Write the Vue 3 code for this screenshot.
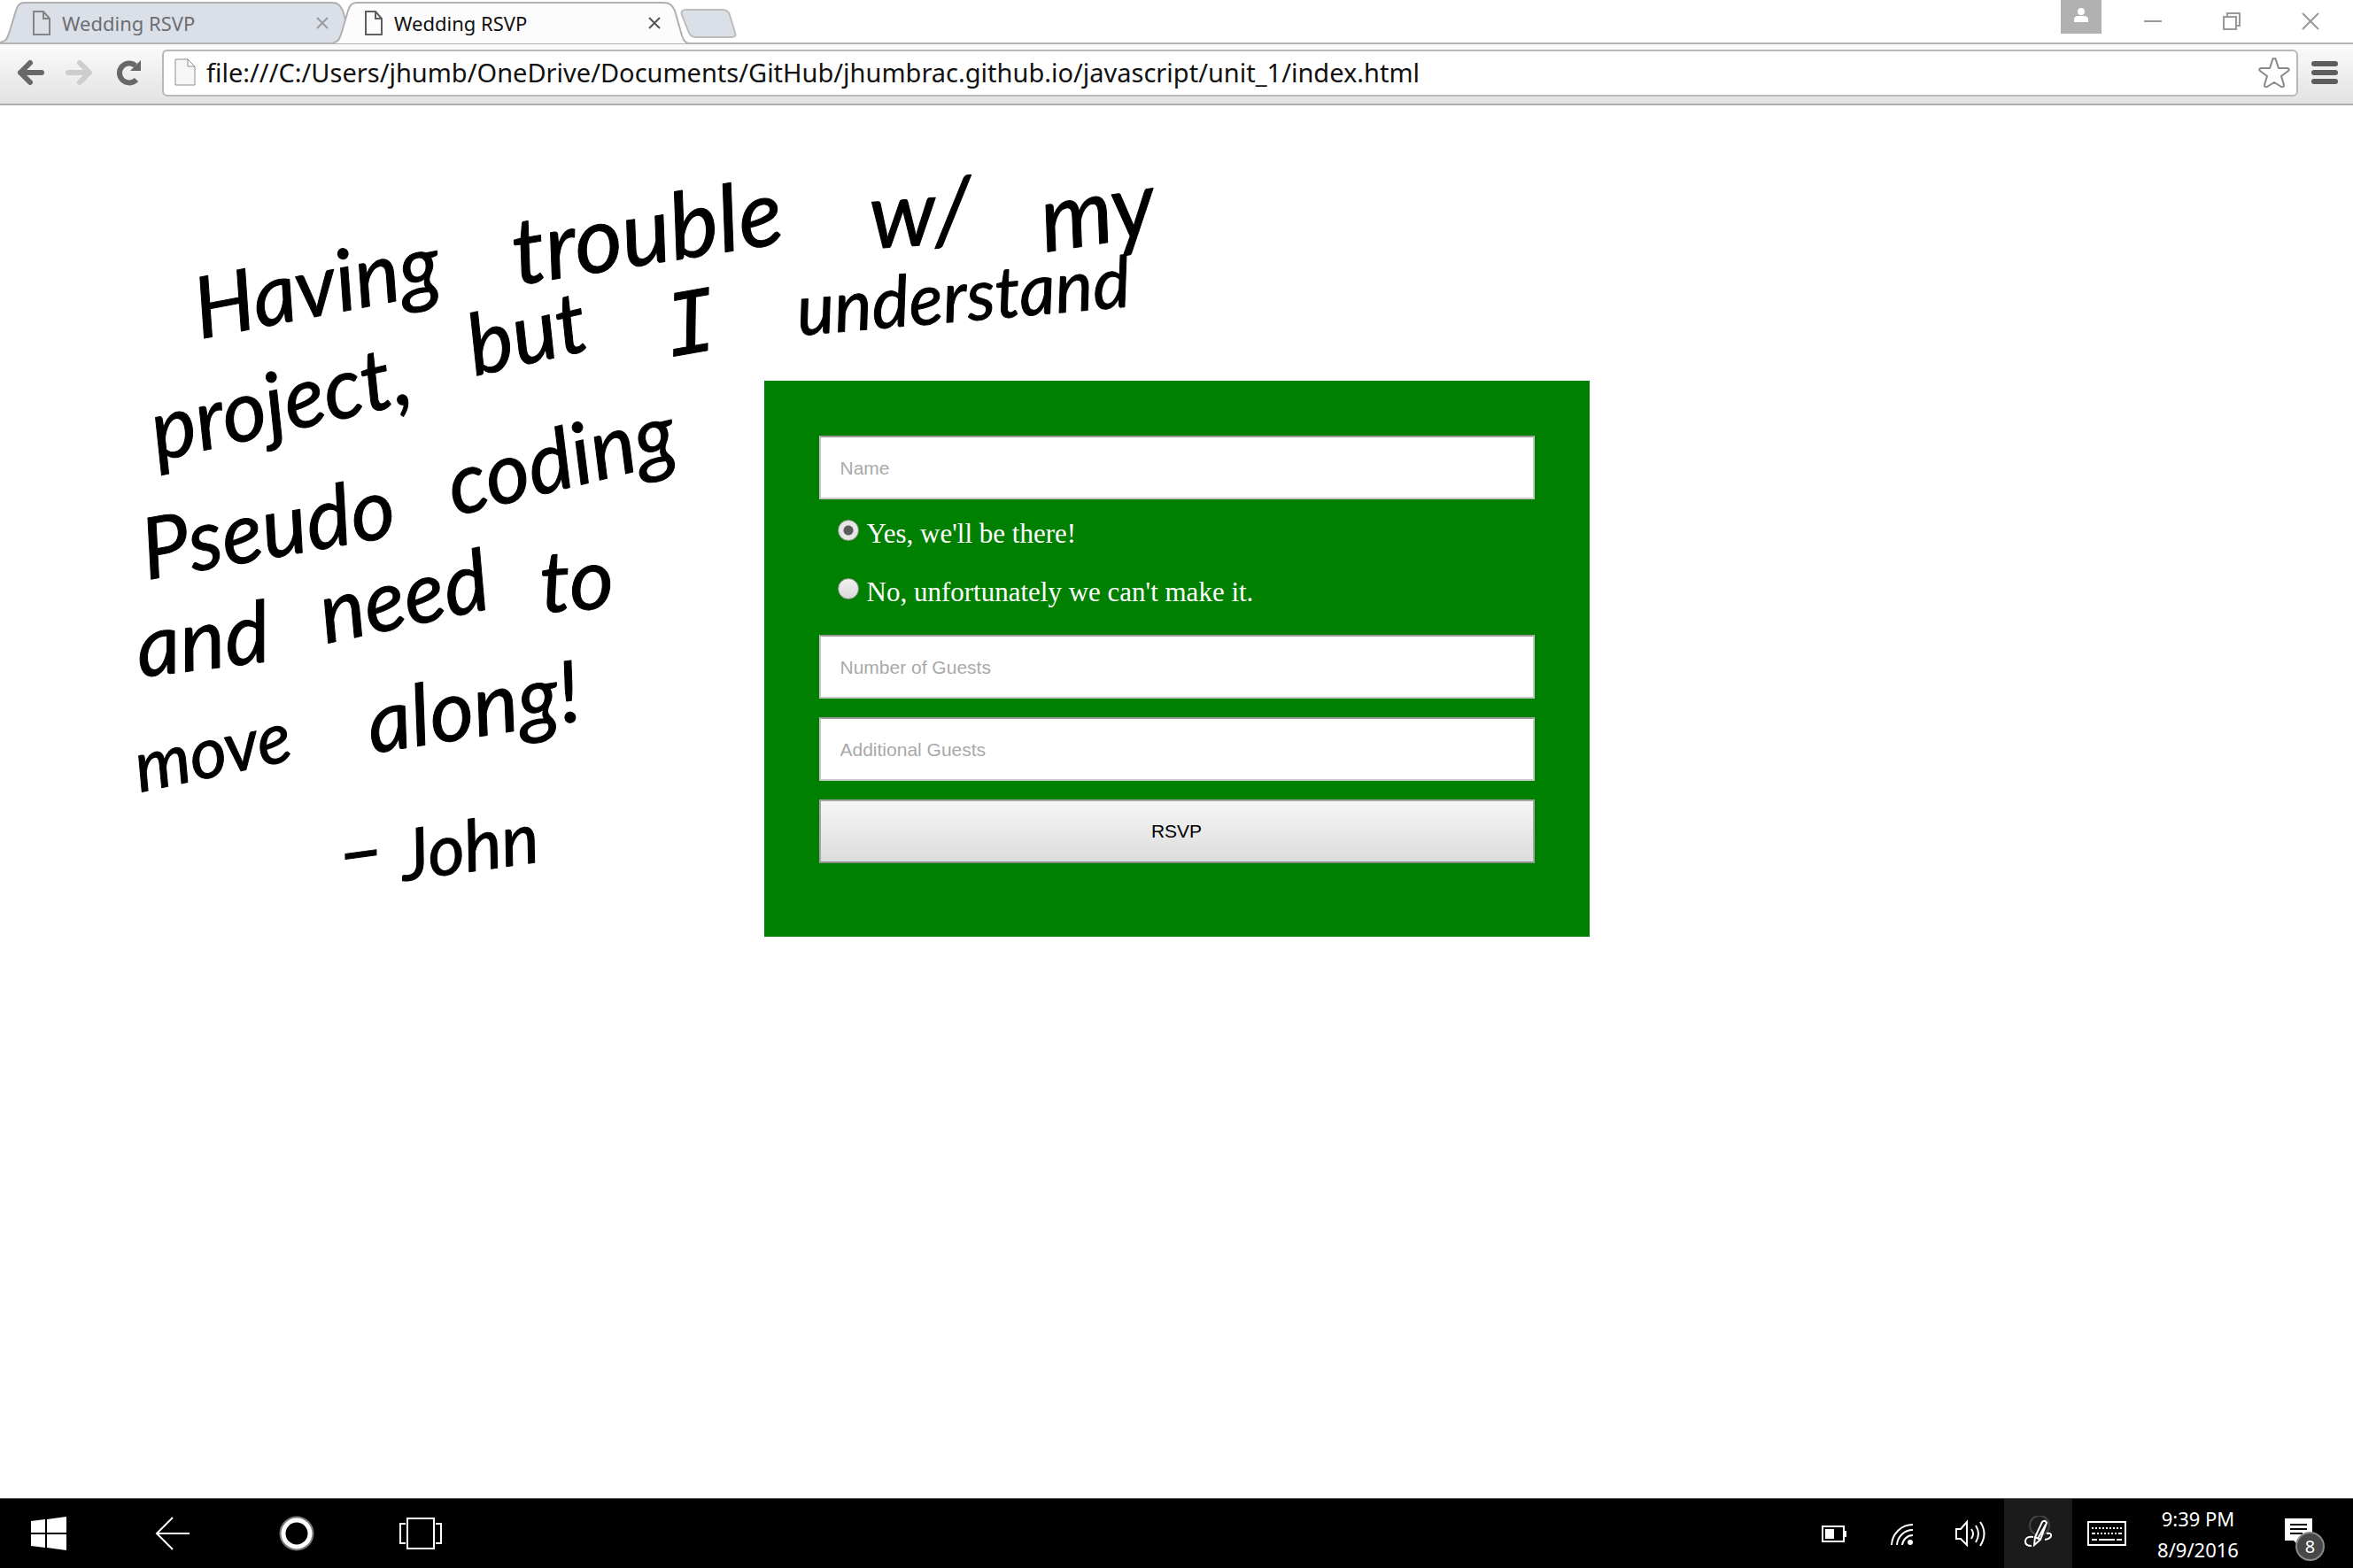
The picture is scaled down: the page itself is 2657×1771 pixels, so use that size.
<script setup>
import { ref } from 'vue'

const tabs = [
  { title: 'Wedding RSVP', active: false },
  { title: 'Wedding RSVP', active: true },
]
const address = ref('file:///C:/Users/jhumb/OneDrive/Documents/GitHub/jhumbrac.github.io/javascript/unit_1/index.html')
const attending = ref('yes')

// Pen note: every word has its own spot, slope and size on the page
const words = [
  { t: 'Having', x: 226, y: 264, r: -11, s: 'l' },
  { t: 'trouble', x: 584, y: 203, r: -9, s: 'xl' },
  { t: 'w/', x: 984, y: 162, r: -4, s: 'xl' },
  { t: 'my', x: 1180, y: 166, r: -9, s: 'xl' },
  { t: 'project,', x: 178, y: 402, r: -13, s: 'l' },
  { t: 'but', x: 536, y: 306, r: -13, s: 'l' },
  { t: 'I', x: 758, y: 284, r: -10, s: 'serif' },
  { t: 'understand', x: 902, y: 260, r: -5, s: 'm' },
  { t: 'Pseudo', x: 166, y: 536, r: -10, s: 'l' },
  { t: 'coding', x: 514, y: 464, r: -14, s: 'l' },
  { t: 'and', x: 158, y: 646, r: -7, s: 'l' },
  { t: 'need', x: 368, y: 608, r: -12, s: 'l' },
  { t: 'to', x: 612, y: 573, r: -4, s: 'l' },
  { t: 'move', x: 158, y: 776, r: -12, s: 'm' },
  { t: 'along!', x: 420, y: 732, r: -9, s: 'l' },
  { t: '–', x: 384, y: 878, r: -8, s: 'l' },
  { t: 'John', x: 456, y: 876, r: -8, s: 'm' },
]
</script>

<template>
  <div class="screen">
    <header class="tabstrip">
      <nav class="tabs">
        <div v-for="(tab, i) in tabs" :key="i" class="tab" :class="{ active: tab.active }">
          <svg class="tab-shape" viewBox="0 0 404 48" preserveAspectRatio="none" aria-hidden="true">
            <path d="M0 47C8 45 8 42 11 34L18 10C20 4 22 1 28 1H374C382 1 384 4 387 10L395 38C397 44 399 47 404 47" />
          </svg>
          <svg class="doc" viewBox="0 0 20 28" aria-hidden="true"><path d="M1 1H12L19 9V27H1ZM12 1V9H19" /></svg>
          <a href="#" class="tab-title">{{ tab.title }}</a>
          <button class="tab-close" aria-label="Close tab">
            <svg viewBox="0 0 16 16"><path d="M2 2L14 14M14 2L2 14" /></svg>
          </button>
        </div>
        <button class="newtab" aria-label="New tab">
          <svg viewBox="0 0 66 34"><path d="M7 1H48Q54 1 56 7L62 27Q64 32 58 32H18Q12 32 10 27L2 7Q0 1 7 1Z" /></svg>
        </button>
      </nav>
      <div class="window-controls">
        <button class="profile" aria-label="Profile">
          <svg viewBox="0 0 18 18"><circle cx="9" cy="5" r="4" /><path d="M1 17V14Q1 10 6 10H12Q17 10 17 14V17Z" /></svg>
        </button>
        <button aria-label="Minimize"><svg viewBox="0 0 20 20"><path d="M0 10H20" /></svg></button>
        <button aria-label="Restore"><svg viewBox="0 0 20 20"><path d="M1 5H15V19H1ZM5 5V1H19V15H15" /></svg></button>
        <button aria-label="Close"><svg viewBox="0 0 20 20"><path d="M1 1L19 19M19 1L1 19" /></svg></button>
      </div>
    </header>

    <div class="toolbar">
      <button class="tool" aria-label="Back"><svg viewBox="0 0 32 30"><path d="M29 15H5M16 4L5 15L16 26" /></svg></button>
      <button class="tool faint" aria-label="Forward"><svg viewBox="0 0 32 30"><path d="M3 15H27M16 4L27 15L16 26" /></svg></button>
      <button class="tool reload" aria-label="Reload">
        <svg viewBox="0 0 32 30"><path d="M24 23A11 11 0 1 1 23 7" /><path class="solid" d="M29 1V13H17Z" /></svg>
      </button>
      <div class="omnibox">
        <svg class="page-icon" viewBox="0 0 24 32" aria-hidden="true"><path d="M1 1H15L23 9V30H1ZM15 1V9H23" /></svg>
        <input v-model="address" type="text" aria-label="Address" spellcheck="false" />
        <button class="star" aria-label="Bookmark">
          <svg viewBox="0 0 36 34"><path d="M18 1Q20 1 20 3L23 12H33Q36 13 34 15L26 21L29 31Q29 34 26 33L18 28L10 33Q7 34 7 31L10 21L2 15Q0 13 3 12H13L16 3Q16 1 18 1Z" /></svg>
        </button>
      </div>
      <button class="menu" aria-label="Menu"><i></i><i></i><i></i></button>
    </div>

    <main class="page">
      <form class="rsvp" @submit.prevent>
        <input class="field" type="text" placeholder="Name" aria-label="Name" />
        <div class="choices">
          <label><input v-model="attending" type="radio" name="attending" value="yes" /><span>Yes, we'll be there!</span></label>
          <label><input v-model="attending" type="radio" name="attending" value="no" /><span>No, unfortunately we can't make it.</span></label>
        </div>
        <input class="field" type="text" placeholder="Number of Guests" aria-label="Number of Guests" />
        <input class="field" type="text" placeholder="Additional Guests" aria-label="Additional Guests" />
        <button class="field submit" type="submit">RSVP</button>
      </form>

      <svg class="ink">
        <text v-for="(w, i) in words" :key="i" :class="w.s" :transform="`translate(${w.x} ${w.y}) rotate(${w.r})`">{{ w.t }}</text>
      </svg>
    </main>

    <footer class="taskbar">
      <div class="left">
        <button aria-label="Start">
          <svg viewBox="0 0 40 40"><path class="fill" d="M0 6L16 4V19H0ZM18 4L40 1V19H18ZM0 21H16V36L0 34ZM18 21H40V39L18 36Z" /></svg>
        </button>
        <button aria-label="Back"><svg viewBox="0 0 40 40"><path d="M39 20H2M20 2L2 20L20 38" /></svg></button>
        <button aria-label="Search"><svg viewBox="0 0 40 40"><circle class="halo" cx="20" cy="20" r="17" /><circle class="ring" cx="20" cy="20" r="15" /></svg></button>
        <button aria-label="Task view"><svg class="wide" viewBox="0 0 48 40"><path d="M9 3H39V37H9ZM7 9H1V31H7M41 9H47V31H41" /></svg></button>
      </div>
      <div class="tray">
        <button class="slot" aria-label="Battery">
          <svg viewBox="0 0 40 40"><path d="M7 12H31V29H7ZM33 17V24" /><path class="fill" d="M10 15H20V26H10Z" /></svg>
        </button>
        <button class="slot" aria-label="Network">
          <svg viewBox="0 0 40 40"><path d="M8 33A24 24 0 0 1 32 10M14 33A18 18 0 0 1 32 16M20 33A12 12 0 0 1 32 22" /><circle class="fill" cx="29" cy="30" r="3" /></svg>
        </button>
        <button class="slot" aria-label="Volume">
          <svg viewBox="0 0 40 40"><path d="M4 15H9L16 7V33L9 26H4ZM21 15Q25 20 21 26M26 11Q32 20 26 30M31 7Q40 20 31 34" /></svg>
        </button>
        <button class="slot pen" aria-label="Pen">
          <svg viewBox="0 0 40 40"><circle class="dim" cx="21" cy="11" r="11" /><path d="M15 33L16 24L24 7Q27 4 29 8L22 27ZM16 24L22 27M19 26L28 10M14 24Q5 23 5 29Q5 34 12 34M29 20Q35 19 34 23Q33 26 27 27" /></svg>
        </button>
        <button class="slot" aria-label="Keyboard">
          <svg class="keys" viewBox="0 0 44 28"><path d="M1 1H43V27H1Z" /><path stroke-dasharray="2 2" d="M5 8H39" /><path stroke-dasharray="4 2 2 2 2 2 2 2 2 2 2 2 2 2 4" d="M5 14H39" /><path d="M5 21H11M13 21H31M33 21H39" /></svg>
        </button>
        <div class="clock"><time>9:39 PM</time><time>8/9/2016</time></div>
        <button class="notes" aria-label="Notifications">
          <svg viewBox="0 0 32 32"><path class="fill" d="M0 1H31V26H14V30L10 26H0Z" /><path class="lines" d="M6 8H25M6 13H25M6 18H20" /></svg>
          <span class="badge">8</span>
        </button>
      </div>
    </footer>
  </div>
</template>

<style>
body { margin: 0; background: #fff; }
</style>

<style scoped>
* { box-sizing: border-box; }
button { border: 0; padding: 0; margin: 0; background: none; color: inherit; display: flex; align-items: center; justify-content: center; }
svg { display: block; fill: none; flex: none; }
.screen { display: flex; flex-direction: column; min-height: 100vh; font-family: "Noto Sans", sans-serif; color: #000; }

.tabstrip { display: flex; justify-content: space-between; align-items: stretch; height: 50px; border-bottom: 2px solid #b4b4b4; }
.tabs { display: flex; padding-top: 2px; }
.tab { position: relative; display: flex; align-items: center; width: 404px; height: 47px; margin-right: -29px; padding: 0 32px 0 37px; flex: none; }
.tab.active { z-index: 1; height: 48px; margin-right: -11px; }
.tab-shape { position: absolute; inset: 0; width: 100%; height: 100%; fill: #dbe0e8; stroke: #b0b0b0; stroke-width: 2; }
.active .tab-shape { fill: #fcfcfc; }
.doc { position: relative; width: 20px; height: 28px; stroke: #858585; stroke-width: 2; }
.active .doc { stroke: #5f5f5f; }
.tab-title { position: relative; flex: 1; margin-left: 13px; font-size: 22px; line-height: 28px; color: #6c6e72; text-decoration: none; }
.active .tab-title { color: #111; }
.tab-close { position: relative; width: 16px; height: 16px; }
.tab-close svg { width: 16px; height: 16px; stroke: #989ba0; stroke-width: 2; }
.active .tab-close svg { stroke: #555; }
.newtab { width: 66px; height: 34px; margin-top: 8px; }
.newtab svg { width: 66px; height: 34px; fill: #dbe0e8; stroke: #bcbcbc; stroke-width: 2; }
.window-controls { display: flex; height: 48px; padding-right: 4px; }
.window-controls button { width: 89px; }
.window-controls svg { width: 20px; height: 20px; stroke: #999; stroke-width: 2; }
.window-controls .profile { width: 46px; height: 38px; margin-right: 13px; padding-bottom: 4px; background: #b1b1b1; }
.window-controls .profile svg { width: 18px; height: 18px; fill: #fff; stroke: none; }

.toolbar { display: flex; align-items: center; height: 69px; padding: 0 17px 3px 18px; background: linear-gradient(#fbfbfb, #e2e2e2); border-bottom: 2px solid #acacac; }
.tool { width: 32px; height: 32px; margin-right: 24px; }
.tool svg { width: 32px; height: 30px; stroke: #686868; stroke-width: 6; stroke-linecap: round; stroke-linejoin: round; }
.tool.faint svg { stroke: #cdcdcd; }
.tool.reload { margin-right: 21px; }
.reload svg { stroke-linecap: butt; }
.tool .solid { fill: #686868; stroke: none; }
.omnibox { flex: 1; display: flex; align-items: center; height: 53px; padding: 0 7px 0 12px; background: #fff; border: 2px solid #b8b8b8; border-radius: 6px; }
.page-icon { width: 24px; height: 32px; fill: #f7f7f7; stroke: #8e8e8e; stroke-width: 1; }
.omnibox input { flex: 1; min-width: 0; border: 0; outline: 0; padding: 0 0 0 12px; background: none; font: 29px/40px "Noto Sans", sans-serif; color: #111; }
.star svg { width: 36px; height: 34px; stroke: #888; stroke-width: 2; stroke-linejoin: round; }
.menu { flex-direction: column; gap: 4px; width: 30px; margin-left: 15px; }
.menu i { width: 30px; height: 6px; border-radius: 3px; background: #5d5d5d; }

.page { position: relative; flex: 1; padding-top: 311px; }
.rsvp { display: flex; flex-direction: column; width: 932px; max-width: 100%; margin: 0 auto; padding: 62px 62px 83px; background: #008000; }
.field { width: 100%; height: 72px; margin: 0 0 21px; padding: 2px 22px 0; border: 2px solid #c8c8c8; border-top-color: #9a9a9a; border-radius: 0; background: #fff; font: 21px "Liberation Sans", Arial, sans-serif; color: #000; }
.field::placeholder { color: #a9a9a9; opacity: 1; }
.submit { margin-bottom: 0; padding-top: 0; border-color: #a6a6a6 #a6a6a6 #8c8c8c; background: linear-gradient(#f6f6f6, #dcdcdc); }
.choices { margin: -13px 0 13px 21px; }
.choices label { display: flex; align-items: center; height: 66px; padding-bottom: 4px; color: #fff; font: 31px/36px "Liberation Serif", "Times New Roman", serif; }
.choices input { appearance: none; width: 24px; height: 24px; margin: 0 9px 8px 0; border: 1px solid #8f8f8f; border-radius: 50%; background: linear-gradient(#f0f0f0, #dadada); }
.choices input:checked { background: radial-gradient(circle, #5c5c5c 0 5px, #e6e6e6 6px); }

.ink { position: absolute; left: 0; top: 0; width: 100%; height: 100%; pointer-events: none; overflow: visible; }
.ink text { fill: #000; stroke: #000; stroke-width: 1; stroke-linejoin: round; font-family: Lato, sans-serif; font-style: italic; font-size: 96px; }
.ink .m { font-size: 80px; }
.ink .xl { font-size: 104px; }
.ink .serif { font-family: "DejaVu Sans Mono", monospace; }

.taskbar { display: flex; justify-content: space-between; height: 79px; background: #000; border-top: 1px solid #555; color: #fff; }
.taskbar svg { width: 40px; height: 40px; stroke: #fff; stroke-width: 2; }
.taskbar svg .fill { fill: #fff; stroke: none; }
.left { display: flex; gap: 100px; padding-left: 35px; }
.left button:last-child { margin-left: -4px; }
.left svg.wide { width: 48px; }
.taskbar .halo { stroke: #777; stroke-width: 5; }
.taskbar .ring { stroke-width: 5; }
.tray { display: flex; align-items: stretch; }
.slot { width: 77px; }
.pen { background: #1b1b1b; }
.taskbar .keys { width: 44px; height: 28px; }
.taskbar .dim { stroke: #444; }
.clock { display: flex; flex-direction: column; align-items: center; justify-content: center; width: 130px; padding-top: 1px; font-size: 22px; line-height: 35px; }
.notes { position: relative; width: 110px; padding: 0 12px 4px 0; }
.taskbar .notes svg { width: 32px; height: 32px; }
.taskbar .lines { stroke: #000; }
.badge { position: absolute; left: 45px; top: 37px; width: 33px; height: 33px; border: 2px solid #8a8a8a; border-radius: 50%; background: #484848; font: 20px/29px "Noto Sans", sans-serif; text-align: center; }
</style>
